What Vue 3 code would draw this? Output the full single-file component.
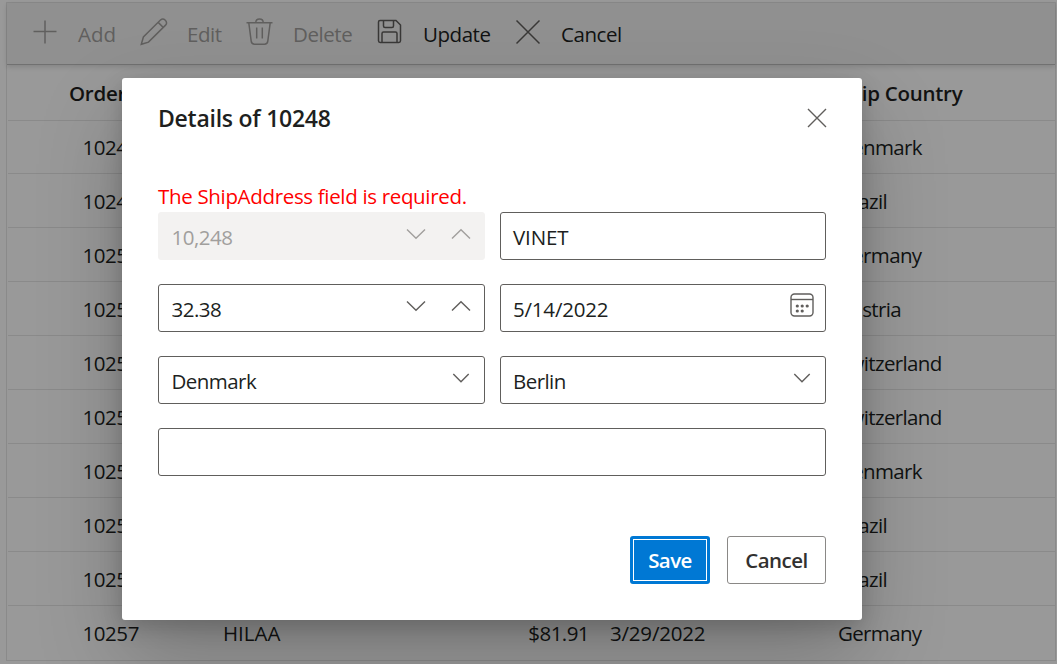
<script setup>
const tools = [
  { label: 'Add', icon: 'add', disabled: true },
  { label: 'Edit', icon: 'edit', disabled: true },
  { label: 'Delete', icon: 'delete', disabled: true },
  { label: 'Update', icon: 'update', disabled: false },
  { label: 'Cancel', icon: 'cancel', disabled: false },
]
const countries = ['Denmark', 'Brazil', 'Germany', 'Austria', 'Switzerland', 'Switzerland', 'Denmark', 'Brazil', 'Brazil', 'Germany']
const rows = countries.map((country, i) => ({
  id: 10248 + i,
  country,
  customer: i === 9 ? 'HILAA' : '',
  freight: i === 9 ? '$81.91' : '',
  date: i === 9 ? '3/29/2022' : '',
}))
</script>

<template>
  <main class="page">
    <section class="grid">
      <header class="toolbar">
        <div v-for="t in tools" :key="t.label" class="tool" :class="[t.icon, { disabled: t.disabled }]">
          <svg class="tool-icon" width="28" height="28" viewBox="0 0 28 28">
            <path v-if="t.icon === 'add'" d="M14 2.5V25.5M2.5 13.5H25.5" />
            <g v-else-if="t.icon === 'edit'">
              <path d="M1.3 26.3L3.4 19L20.7 1.8Q23 .1 25.3 2.3Q27.5 4.6 25.8 6.9L8.5 24.1ZM18.2 4.4L23.3 9.5" />
            </g>
            <g v-else-if="t.icon === 'delete'">
              <path d="M0.5 4.8H26.5M2.8 4.8L5.2 23.2Q5.6 26.3 8.5 26.3H18.5Q21.4 26.3 21.8 23.2L24.2 4.8M9.8 4.5Q9.8 1 13.5 1T17.2 4.5M10.7 9.5V20.5M16.3 9.5V20.5" />
            </g>
            <g v-else-if="t.icon === 'update'">
              <path d="M4 2.5H20L24.5 7V22.8Q24.5 24.5 22.8 24.5H4.2Q2.5 24.5 2.5 22.8V4Q2.5 2.5 4 2.5ZM7.5 2.5V8Q7.5 9.5 9 9.5H16Q17.5 9.5 17.5 8V2.5M6 24.5V15.5Q6 14 7.5 14H19.5Q21 14 21 15.5V24.5" />
            </g>
            <path v-else d="M2.5 2.5L25.5 25.5M25.5 2.5L2.5 25.5" />
          </svg>
          <span>{{ t.label }}</span>
        </div>
      </header>
      <div class="row head">
        <span class="id">Order ID</span><span></span><span></span><span></span><span class="country">Ship Country</span>
      </div>
      <div v-for="r in rows" :key="r.id" class="row">
        <span class="id">{{ r.id }}</span>
        <span class="customer">{{ r.customer }}</span>
        <span class="freight">{{ r.freight }}</span>
        <span class="date">{{ r.date }}</span>
        <span class="country">{{ r.country }}</span>
      </div>
    </section>
    <div class="overlay"></div>
    <section class="dialog" role="dialog">
      <header class="title">
        <span>Details of 10248</span>
        <svg width="20" height="20" viewBox="0 0 20 20"><path d="M1 1L19 19M19 1L1 19" /></svg>
      </header>
      <p class="error">The ShipAddress field is required.</p>
      <div class="form">
        <div class="field off">
          <span class="val num">10,248</span>
          <svg class="spin" width="20" height="12" viewBox="0 0 20 12"><path d="M1 1.5L10 10.3L19 1.5" /></svg>
          <svg class="spin" width="20" height="12" viewBox="0 0 20 12"><path d="M1 10.5L10 1.7L19 10.5" /></svg>
        </div>
        <div class="field"><span class="val vinet">VINET</span></div>
        <div class="field">
          <span class="val num">32.38</span>
          <svg class="spin" width="20" height="12" viewBox="0 0 20 12"><path d="M1 1.5L10 10.3L19 1.5" /></svg>
          <svg class="spin" width="20" height="12" viewBox="0 0 20 12"><path d="M1 10.5L10 1.7L19 10.5" /></svg>
        </div>
        <div class="field">
          <span class="val day">5/14/2022</span>
          <svg class="calendar" width="24" height="24" viewBox="0 0 24 24">
            <rect x="1" y="1" width="22" height="22" rx="3.5" />
            <path d="M1 6.5H23" />
            <g class="dots"><circle cx="7.3" cy="13" r="1.6" /><circle cx="12.2" cy="13" r="1.6" /><circle cx="17.2" cy="13" r="1.6" /><circle cx="7.3" cy="18" r="1.6" /><circle cx="12.2" cy="18" r="1.6" /></g>
          </svg>
        </div>
        <div class="field">
          <span class="val place">Denmark</span>
          <svg class="drop" width="18" height="10" viewBox="0 0 18 10"><path d="M1.3 1L9 8.7L16.7 1" /></svg>
        </div>
        <div class="field">
          <span class="val place">Berlin</span>
          <svg class="drop" width="18" height="10" viewBox="0 0 18 10"><path d="M1.3 1L9 8.7L16.7 1" /></svg>
        </div>
        <div class="field wide"></div>
      </div>
      <footer class="actions">
        <button class="btn save"><span>Save</span></button>
        <button class="btn"><span>Cancel</span></button>
      </footer>
    </section>
  </main>
</template>

<style>
body { background: #fff; overflow: hidden; }
</style>

<style scoped>
* { box-sizing: border-box; }
.page { position: relative; width: 1057px; height: 664px; overflow: hidden; font-family: "Open Sans", "Noto Sans", sans-serif; font-size: 20.5px; font-weight: 400; line-height: 28px; letter-spacing: -0.55px; color: #201f1e; white-space: nowrap; }
.grid { margin: 2px 1px 0 6px; height: 659px; border: 1px solid #e6e6e6; }
.toolbar { display: flex; height: 62px; padding-left: 24px; background: #f1f1f1; border-bottom: 1px solid #bdbdbd; box-shadow: 0 2px 5px rgba(0, 0, 0, .14); }
.tool { display: flex; gap: 19px; letter-spacing: -0.45px; }
.tool span { margin-top: 17px; }
.tool-icon { margin-top: 15px; flex: none; fill: none; stroke: #605e5c; stroke-width: 1.5; }
.add { width: 109px; letter-spacing: 0; }
.edit { width: 106px; }
.delete { width: 130px; }
.update { width: 138px; }
.disabled { color: #a19f9d; }
.disabled .tool-icon { stroke: #a19f9d; }
.row { display: grid; grid-template-columns: 132px 198px 251px 249px 1fr; align-items: center; height: 54px; margin-left: 1px; border-bottom: 1px solid #e6e6e6; }
.row:nth-child(3) { height: 53px; }
.row:last-child { border-bottom: 0; }
.row .id { text-align: right; padding-right: 1px; letter-spacing: -0.4px; }
.row .customer { padding-left: 83px; letter-spacing: 0; }
.row .freight { text-align: right; }
.row .date { padding-left: 21px; letter-spacing: -0.2px; }
.row .country { letter-spacing: -0.65px; }
.row.head { height: 56px; font-weight: 600; }
.head .id { text-align: left; padding-left: 61px; }
.row.head span { letter-spacing: -0.27px; }
.overlay { position: absolute; inset: 0; background: rgba(0, 0, 0, .4); }
.dialog { position: absolute; left: 122px; top: 78px; width: 740px; height: 542px; padding: 0 36px; background: #fff; border-radius: 3px; box-shadow: 0 38px 86px rgba(0, 0, 0, .22), 0 7px 22px rgba(0, 0, 0, .18); }
.title { display: flex; justify-content: space-between; align-items: flex-start; height: 104px; padding-top: 26px; font-size: 23px; font-weight: 600; letter-spacing: -0.25px; }
.title svg { margin-top: 3.5px; margin-right: -1px; }
svg { flex: none; fill: none; stroke: #605e5c; stroke-width: 1.4; }
.error { margin: 0; height: 30px; color: #f00; letter-spacing: -0.33px; }
.form { display: grid; grid-template-columns: 327px 326px; column-gap: 15px; row-gap: 24px; }
.field { display: flex; align-items: flex-start; height: 48px; padding: 0 13px 0 12px; border: 1px solid #605e5c; border-radius: 3px; }
.field:nth-child(odd) { padding: 0 13.5px 0 12.5px; }
.val { flex: 1; margin-top: 10px; }
.num { letter-spacing: -0.5px; }
.day { letter-spacing: -0.2px; }
.vinet { letter-spacing: -0.1px; }
.off { background: #f3f2f1; border-color: #f3f2f1; color: #a19f9d; }
.off svg { stroke: #a19f9d; }
.spin { margin-top: 15px; }
.spin + .spin { margin-left: 25px; }
.calendar { margin: 8px -2px 0 0; }
.dots { fill: #605e5c; stroke: none; }
.drop { margin: 16px 1px 0 0; }
.wide { grid-column: 1 / 3; }
.actions { display: flex; justify-content: flex-end; gap: 17px; margin-top: 60px; }
.btn { width: 99px; height: 48px; padding: 0; border: 1px solid #8a8886; border-radius: 3px; background: #fff; color: #323130; font: inherit; font-weight: 600; letter-spacing: inherit; line-height: 28px; }
.save { width: 80px; border: 3px solid #0078d4; background: #0078d4; color: #fff; box-shadow: inset 0 0 0 1px #fff; }
</style>
